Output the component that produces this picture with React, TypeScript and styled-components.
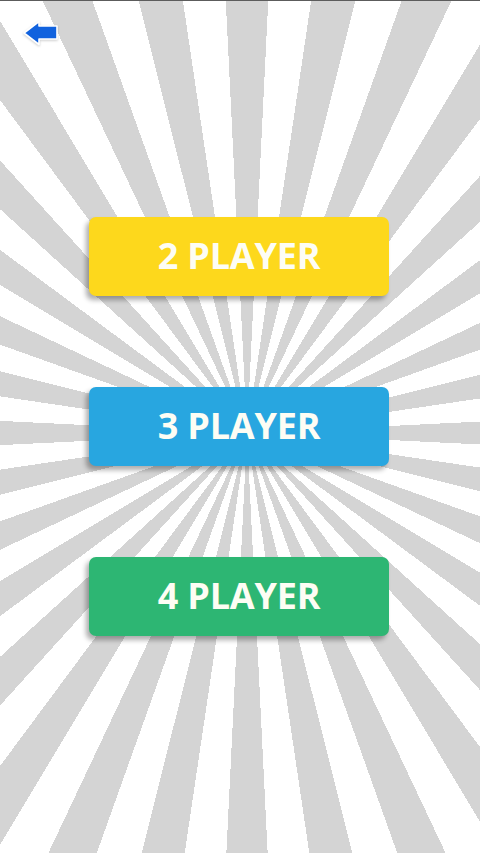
import React from 'react';
import styled, { createGlobalStyle } from 'styled-components';

const GlobalStyle = createGlobalStyle`
  html, body {
    margin: 0;
    padding: 0;
    width: 100%;
    height: 100%;
    overflow: hidden;
  }
  #root {
    height: 100%;
  }
`;

const Screen = styled.div`
  position: relative;
  width: 480px;
  height: 853px;
  box-sizing: border-box;
  border-top: 1px solid #5c5c5c;
  background: repeating-conic-gradient(
    from -2.8125deg at 247px 432px,
    #d4d4d4 0deg 5.625deg,
    #ffffff 5.625deg 11.25deg
  );
  display: flex;
  flex-direction: column;
  font-family: 'Open Sans', 'Liberation Sans', sans-serif;
`;

const TopBar = styled.div`
  display: flex;
  align-items: center;
  height: 68px;
  padding: 0 0 0 22px;
`;

const BackButton = styled.button`
  border: none;
  background: none;
  padding: 0;
  width: 40px;
  height: 30px;
  cursor: pointer;
  display: block;
  filter: drop-shadow(0 1px 1px rgba(0, 0, 0, 0.2));
`;

const Menu = styled.div`
  display: flex;
  flex-direction: column;
  align-items: center;
  gap: 91px;
  padding-top: 148px;
  padding-right: 2px;
`;

const PlayerButton = styled.button<{ $bg: string }>`
  width: 300px;
  height: 79px;
  border: none;
  border-radius: 7px;
  background: ${(p) => p.$bg};
  box-shadow: -3px 4px 5px rgba(0, 0, 0, 0.32);
  color: #fdfdf4;
  font-family: 'Open Sans', 'Liberation Sans', sans-serif;
  font-weight: 700;
  font-size: 36px;
  letter-spacing: -0.2px;
  display: flex;
  align-items: center;
  justify-content: center;
  padding: 0 0 2px 0;
  cursor: pointer;
`;

const BackArrow = () => (
  <svg width="40" height="30" viewBox="0 0 40 30">
    <path
      d="M2 13 L17 1.5 L17 6 L35 6 L35 19 L17 19 L17 24.5 Z"
      fill="#1162de"
      stroke="#ffffff"
      strokeWidth="1.6"
      strokeLinejoin="round"
    />
  </svg>
);

const modes = [
  { label: '2 PLAYER', color: '#fdd81c' },
  { label: '3 PLAYER', color: '#28a6e0' },
  { label: '4 PLAYER', color: '#2db673' },
];

export default function App() {
  return (
    <>
      <GlobalStyle />
      <Screen>
        <TopBar>
          <BackButton aria-label="Back">
            <BackArrow />
          </BackButton>
        </TopBar>
        <Menu>
          {modes.map((m) => (
            <PlayerButton key={m.label} $bg={m.color}>
              {m.label}
            </PlayerButton>
          ))}
        </Menu>
      </Screen>
    </>
  );
}
